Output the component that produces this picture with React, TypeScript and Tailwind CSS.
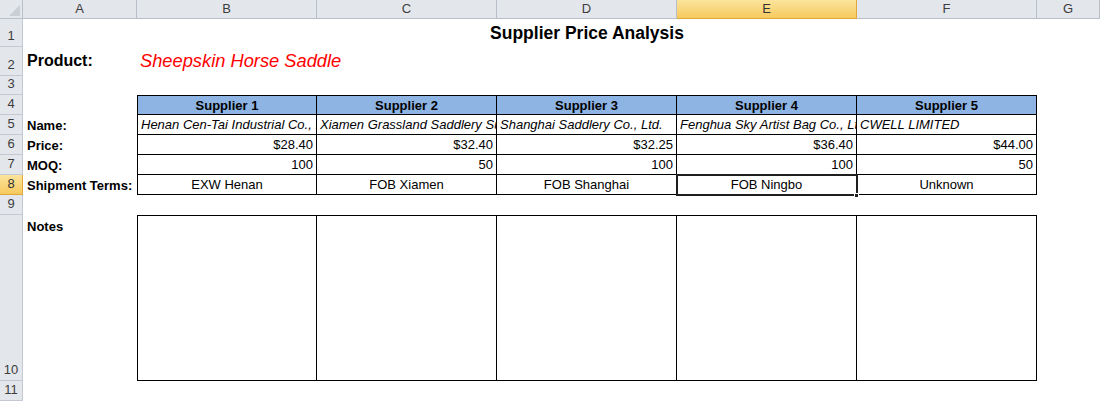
const cols = ["A", "B", "C", "D", "E", "F", "G"];

const suppliers = [
  { name: "Henan Cen-Tai Industrial Co., Ltd.", price: "$28.40", moq: "100", terms: "EXW Henan" },
  { name: "Xiamen Grassland Saddlery Supplies", price: "$32.40", moq: "50", terms: "FOB Xiamen" },
  { name: "Shanghai Saddlery Co., Ltd.", price: "$32.25", moq: "100", terms: "FOB Shanghai" },
  { name: "Fenghua Sky Artist Bag Co., Ltd.", price: "$36.40", moq: "100", terms: "FOB Ningbo" },
  { name: "CWELL LIMITED", price: "$44.00", moq: "50", terms: "Unknown" },
];

function RowHead({ n, active }: { n?: number; active?: boolean }) {
  return (
    <div
      className={
        "flex items-end justify-center pb-[1px] border-b border-r text-[13px] " +
        (active
          ? "bg-gradient-to-b from-[#fbe49c] to-[#f6c95c] border-[#e2a73c] text-[#333]"
          : "bg-[#e3e6eb] border-[#c4c9d1] text-[#3d3d3d]")
      }
    >
      {n}
    </div>
  );
}

function Label({ text, className = "" }: { text: string; className?: string }) {
  return (
    <div className={"flex items-center pl-[4px] pt-[1px] font-bold text-[13px] whitespace-nowrap overflow-hidden " + className}>
      {text}
    </div>
  );
}

function Cell({ children, className = "", left }: { children?: React.ReactNode; className?: string; left?: boolean }) {
  return (
    <div
      className={
        "flex items-center px-[3px] pt-[1px] text-[13px] whitespace-nowrap overflow-hidden border-b border-r border-black " +
        (left ? "border-l " : "") +
        className
      }
    >
      {children}
    </div>
  );
}

export default function App() {
  return (
    <div className="w-[1100px] h-[401px] overflow-hidden bg-white text-black font-['Liberation_Sans',Arial,sans-serif] relative">
      <div className="grid grid-cols-[23px_114px_180px_180px_180px_180px_180px_1fr] grid-rows-[19px_28px_29px_19px_20px_20px_20px_20px_20px_20px_166px_20px]">
        {/* column headers */}
        <div className="bg-[#e3e6eb] border-b border-r border-[#b9bfc8] relative">
          <div className="absolute right-[2px] bottom-[2px] w-0 h-0 border-l-[11px] border-l-transparent border-b-[11px] border-b-[#c9ced5]" />
        </div>
        {cols.map((c) => (
          <div
            key={c}
            className={
              "flex items-center justify-center text-[13px] border-b border-r " +
              (c === "E"
                ? "bg-gradient-to-b from-[#fbe49c] to-[#f6c95c] border-[#e2a73c] text-[#333]"
                : "bg-[#e3e6eb] border-[#b9bfc8] text-[#3d3d3d]")
            }
          >
            {c}
          </div>
        ))}

        {/* row 1 */}
        <RowHead n={1} />
        <div />
        <div className="col-span-5 flex items-end justify-center pb-[1px] font-bold text-[17.5px]">
          Supplier Price Analysis
        </div>
        <div />

        {/* row 2 */}
        <RowHead n={2} />
        <div className="flex items-end pl-[4px] pb-[3px] font-bold text-[16px]">Product:</div>
        <div className="col-span-3 flex items-end pl-[3px] pb-[2px] italic text-[18.3px] text-[#ff0000]">
          Sheepskin Horse Saddle
        </div>
        <div />
        <div />
        <div />

        {/* row 3 */}
        <RowHead n={3} />
        {cols.map((c) => (
          <div key={c} />
        ))}

        {/* row 4 */}
        <RowHead n={4} />
        <div />
        {suppliers.map((s, i) => (
          <Cell key={i} left={i === 0} className="border-t justify-center font-bold bg-[#8db4e2]">
            Supplier {i + 1}
          </Cell>
        ))}
        <div />

        {/* row 5 */}
        <RowHead n={5} />
        <Label text="Name:" />
        {suppliers.map((s, i) => (
          <Cell key={i} left={i === 0} className="italic">
            {s.name}
          </Cell>
        ))}
        <div />

        {/* row 6 */}
        <RowHead n={6} />
        <Label text="Price:" />
        {suppliers.map((s, i) => (
          <Cell key={i} left={i === 0} className="justify-end">
            {s.price}
          </Cell>
        ))}
        <div />

        {/* row 7 */}
        <RowHead n={7} />
        <Label text="MOQ:" />
        {suppliers.map((s, i) => (
          <Cell key={i} left={i === 0} className="justify-end">
            {s.moq}
          </Cell>
        ))}
        <div />

        {/* row 8 */}
        <RowHead n={8} active />
        <Label text="Shipment Terms:" />
        {suppliers.map((s, i) => (
          <Cell key={i} left={i === 0} className="justify-center">
            {s.terms}
          </Cell>
        ))}
        <div />

        {/* row 9 */}
        <RowHead n={9} />
        {cols.map((c) => (
          <div key={c} />
        ))}

        {/* row 10 notes */}
        <RowHead n={10} />
        <div className="pl-[4px] pt-[2px] font-bold text-[13px]">Notes</div>
        {suppliers.map((s, i) => (
          <div key={i} className={"border-t border-b border-r border-black " + (i === 0 ? "border-l" : "")} />
        ))}
        <div />

        {/* row 11 */}
        <RowHead n={11} />
        {cols.map((c) => (
          <div key={c} />
        ))}
      </div>

      {/* active cell selection E8 */}
      <div className="absolute left-[676px] top-[174px] w-[182px] h-[22px] border-2 border-[#1f1f1f] pointer-events-none" />
      <div className="absolute left-[854px] top-[193px] w-[5px] h-[5px] bg-[#1f1f1f] border border-white" />
    </div>
  );
}
